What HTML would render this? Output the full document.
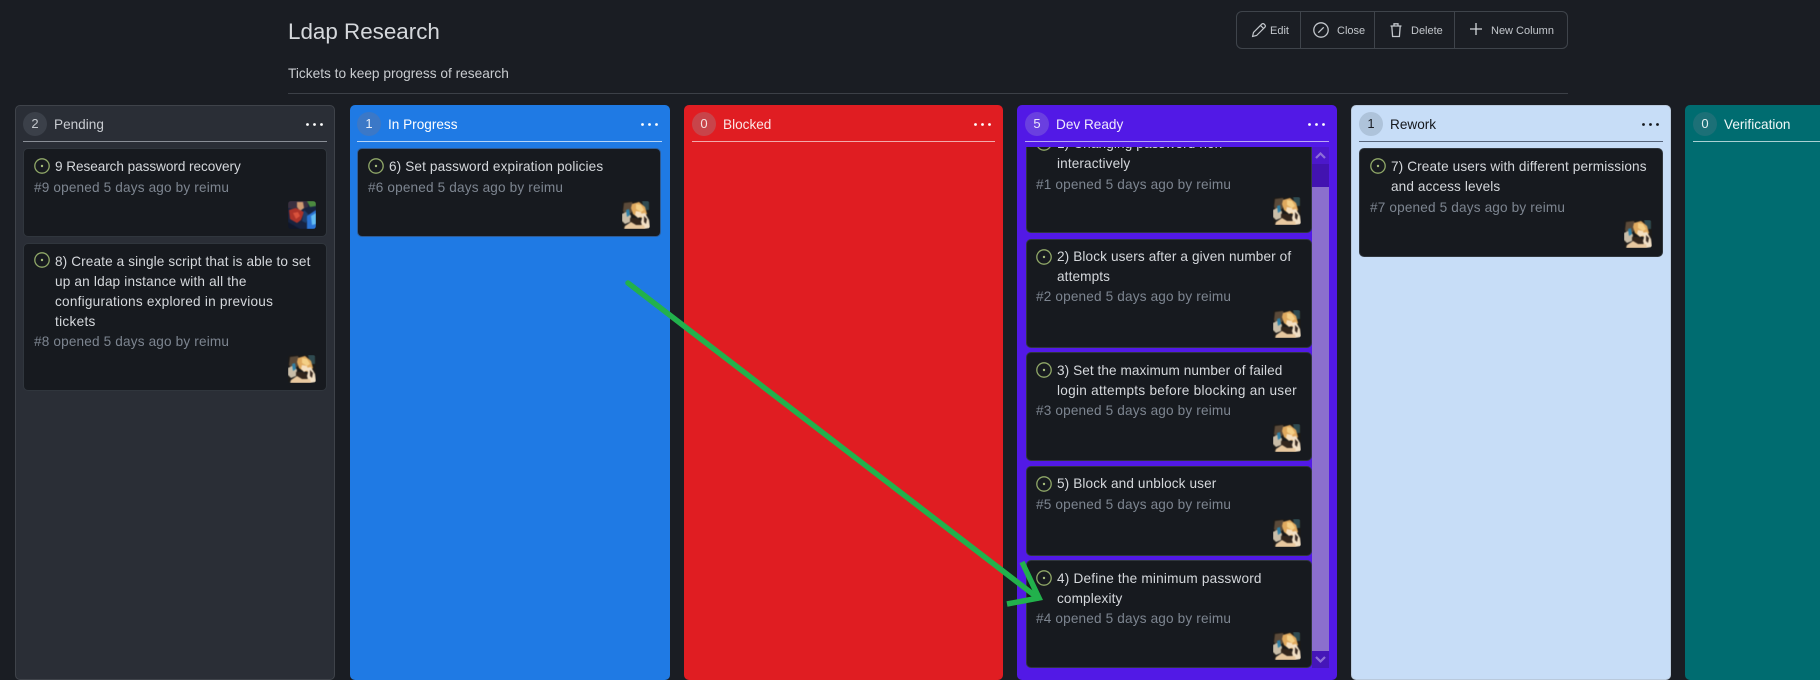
<!DOCTYPE html>
<html lang="en"><head><meta charset="utf-8"><title>Ldap Research</title>
<style>
*{box-sizing:border-box}
html,body{margin:0;padding:0;width:1820px;height:676px;overflow:hidden;background:#1a1d23;font-family:"Liberation Sans",sans-serif}
.a{position:absolute}
.t{position:absolute;white-space:nowrap;line-height:20px;font-size:13.6px;letter-spacing:.12px;color:#d5d8dc}
.m{position:absolute;white-space:nowrap;line-height:20px;font-size:13.6px;letter-spacing:.16px;color:#7d8590}
.col{position:absolute;top:105px;height:575px;width:320px;border-radius:5px;border:1px solid rgba(255,255,255,.1)}
.bd{position:absolute;left:7px;top:6px;width:24px;height:24px;border-radius:50%;text-align:center;line-height:24px;font-size:13px}
.nm{position:absolute;left:38px;top:9px;line-height:20px;font-size:13.6px;white-space:nowrap}
.ln{position:absolute;left:7px;right:7px;top:35px;height:1px}
.dt{position:absolute;right:11px;top:17px;width:17px;height:3px}
.card{position:absolute;background:#171a1f;border:1px solid #30363d;border-radius:5px}
.ic{position:absolute;width:16px;height:16px}
.av{position:absolute;width:28px;height:28px;border-radius:3px}
.btn{position:absolute;top:1px;height:36px;line-height:36px;font-size:11px;color:#c3c7cc;white-space:nowrap}
</style></head><body>
<svg width="0" height="0" style="position:absolute">
<symbol id="o" viewBox="0 0 16 16"><circle cx="8" cy="8" r="7.2" fill="none" stroke="#90a868" stroke-width="1.3"/><circle cx="8" cy="8" r="1.2" fill="#a6bd7c"/></symbol>
<symbol id="g" viewBox="0 0 28 28"><g style="filter:blur(.5px)">
<rect width="28" height="28" fill="#1b1a19"/>
<path d="M2 2l8-1 2 6-3 5-5 2-3-4z" fill="#5b4a39"/>
<path d="M0 13l6-3 3 5-1 6-5 2-3-3z" fill="#c9bda8"/>
<path d="M4 9l3-1 1 6-3 2z" fill="#2f7fa6"/>
<path d="M20 0h7v9h-5z" fill="#2f4a50"/>
<path d="M10 3l7-2 6 5 2 7-4 4-6-1-4-3-2-6z" fill="#dfa95f"/>
<path d="M14 3l5 1 3 5-3 2-5-3z" fill="#f4cf86"/>
<path d="M14 10l5 1 1 4-4 2-3-3z" fill="#f6dfbe"/>
<path d="M8 17l6 0 5 2 1 5-8 0-4-3z" fill="#33261d"/>
<path d="M18 13l5-1 4 7 1 8-7 1-2-7 1-4z" fill="#f2e0c6"/>
<path d="M3 25l6-4 5 3 8 0 1 4H2z" fill="#e8c89f"/>
<path d="M22 15l3 3-1 5-2-2z" fill="#3a2b22"/>
</g></symbol>
<symbol id="r" viewBox="0 0 28 28"><g style="filter:blur(.6px)">
<rect width="28" height="28" fill="#17233f"/>
<path d="M0 0h20v6l-9 3-11-2z" fill="#3a3040"/>
<path d="M19 0h9v5l-6 1z" fill="#4b8a3f"/>
<path d="M9 1h6l1 6-4 3-3-4z" fill="#cf9a72"/>
<path d="M1 9l7-2 8 4-3 8-4 3-7-4z" fill="#ad3329"/>
<path d="M5 12l5-1 2 4-4 3z" fill="#d9523c"/>
<path d="M16 9l5 5-3 8-4-2z" fill="#1d3f6e"/>
<path d="M19 15l9-6v19h-9z" fill="#2a73d4"/>
<path d="M23 15l5-3v11l-4 1z" fill="#63bdf2"/>
<path d="M0 21l12 7H0z" fill="#10172a"/>
</g></symbol>
</svg>

<div class="a" style="left:288px;top:17px;font-size:22.4px;line-height:30px;color:#d5d8dc;white-space:nowrap">Ldap Research</div>
<div class="a" style="left:288px;top:64px;font-size:13.7px;line-height:20px;color:#c9ccd0;white-space:nowrap">Tickets to keep progress of research</div>
<div class="a" style="left:288px;top:93px;width:1280px;height:1px;background:#3c4047"></div>

<div class="a" style="left:1236px;top:11px;width:332px;height:38px;border:1px solid #3f444b;border-radius:6px;background:#1b1e24">
 <div class="a" style="left:63px;top:0;width:1px;height:36px;background:#3f444b"></div>
 <div class="a" style="left:137px;top:0;width:1px;height:36px;background:#3f444b"></div>
 <div class="a" style="left:217px;top:0;width:1px;height:36px;background:#3f444b"></div>
 <svg class="a" style="left:14px;top:10px" width="16" height="16" viewBox="0 0 16 16" fill="none" stroke="#c3c7cc" stroke-width="1.2"><path d="M1.6 14.4l.9-4 8.3-8.3a1.6 1.6 0 0 1 2.3 0l.8.8a1.6 1.6 0 0 1 0 2.3l-8.300 8.300z"/><path d="M9.500 3.400l3.100 3.100"/></svg>
 <div class="btn" style="left:33px">Edit</div>
 <svg class="a" style="left:76px;top:10px" width="16" height="16" viewBox="0 0 16 16" fill="none" stroke="#c3c7cc" stroke-width="1.3"><circle cx="8" cy="8" r="7.200"/><path d="M5.300 10.700l5.400-5.400"/></svg>
 <div class="btn" style="left:100px">Close</div>
 <svg class="a" style="left:151px;top:10px" width="16" height="16" viewBox="0 0 16 16" fill="none" stroke="#c3c7cc" stroke-width="1.3"><path d="M2.500 4h11M6 4V1.800h4V4M3.800 4l.8 10.500h6.800L12.200 4"/></svg>
 <div class="btn" style="left:174px">Delete</div>
 <svg class="a" style="left:231px;top:9px" width="16" height="16" viewBox="0 0 16 16" fill="none" stroke="#d3d6da" stroke-width="1.300"><path d="M8 2v12M2 8h12"/></svg>
 <div class="btn" style="left:254px">New Column</div>
</div>

<!-- Pending -->
<div class="col" style="left:15px;width:320px;background:#2a2e36">
 <div class="bd" style="background:#3b4049;color:#c5c9ce">2</div><div class="nm" style="color:#c9ccd1">Pending</div>
 <div class="ln" style="background:#8a8f97"></div>
 <svg class="dt" viewBox="0 0 17 3"><circle cx="1.500" cy="1.500" r="1.400" fill="#fff"/><circle cx="8.500" cy="1.500" r="1.400" fill="#fff"/><circle cx="15.500" cy="1.500" r="1.400" fill="#fff"/></svg>
</div>
<div class="card" style="left:23px;top:148px;width:304px;height:89px"></div>
<svg class="ic" style="left:34px;top:158px"><use href="#o"/></svg>
<div class="t" style="left:55px;top:157px;letter-spacing:-.06px">9 Research password recovery</div>
<div class="m" style="left:34px;top:178px">#9 opened 5 days ago by reimu</div>
<svg class="av" style="left:288px;top:201px"><use href="#r"/></svg>

<div class="card" style="left:23px;top:243px;width:304px;height:148px"></div>
<svg class="ic" style="left:34px;top:252px"><use href="#o"/></svg>
<div class="t" style="left:55px;top:252px">8) Create a single script that is able to set</div>
<div class="t" style="left:55px;top:272px;letter-spacing:.18px">up an ldap instance with all the</div>
<div class="t" style="left:55px;top:292px;letter-spacing:.23px">configurations explored in previous</div>
<div class="t" style="left:55px;top:312px;letter-spacing:.3px">tickets</div>
<div class="m" style="left:34px;top:332px">#8 opened 5 days ago by reimu</div>
<svg class="av" style="left:288px;top:355px"><use href="#g"/></svg>

<!-- In Progress -->
<div class="col" style="left:350px;background:#1f7ae4;border-color:#1f7ae4">
 <div class="bd" style="background:#3b78c7;color:#e6eefa;left:6px">1</div><div class="nm" style="color:#fff;left:37px">In Progress</div>
 <div class="ln" style="background:#b5d4f7;left:6px"></div>
 <svg class="dt" viewBox="0 0 17 3"><circle cx="1.500" cy="1.500" r="1.400" fill="#fff"/><circle cx="8.500" cy="1.500" r="1.400" fill="#fff"/><circle cx="15.500" cy="1.500" r="1.400" fill="#fff"/></svg>
</div>
<div class="card" style="left:357px;top:148px;width:304px;height:89px;border-color:#2f5b93"></div>
<svg class="ic" style="left:368px;top:158px"><use href="#o"/></svg>
<div class="t" style="left:389px;top:157px">6) Set password expiration policies</div>
<div class="m" style="left:368px;top:178px">#6 opened 5 days ago by reimu</div>
<svg class="av" style="left:622px;top:201px"><use href="#g"/></svg>

<!-- Blocked -->
<div class="col" style="left:684px;width:319px;background:#e01d22;border-color:#e01d22">
 <div class="bd" style="background:#c8444a;color:#f5e0e0;left:7px">0</div><div class="nm" style="color:#fbe6e6;left:38px">Blocked</div>
 <div class="ln" style="background:#f2a9ab"></div>
 <svg class="dt" viewBox="0 0 17 3"><circle cx="1.500" cy="1.500" r="1.400" fill="#fff"/><circle cx="8.500" cy="1.500" r="1.400" fill="#fff"/><circle cx="15.500" cy="1.500" r="1.400" fill="#fff"/></svg>
</div>

<!-- Dev Ready -->
<div class="col" style="left:1017px;background:#5219e6;border-color:#5219e6">
 <div class="bd" style="background:#6a3fe0;color:#efe9fd;left:7px">5</div><div class="nm" style="color:#f0ebfd;left:38px">Dev Ready</div>
 <div class="ln" style="background:#bba8f4"></div>
 <svg class="dt" viewBox="0 0 17 3"><circle cx="1.500" cy="1.500" r="1.400" fill="#fff"/><circle cx="8.500" cy="1.500" r="1.400" fill="#fff"/><circle cx="15.500" cy="1.500" r="1.400" fill="#fff"/></svg>
</div>
<div class="a" style="left:1026px;top:147px;width:286px;height:521px;overflow:hidden">
 <div class="card" style="left:0;top:-40px;width:286px;height:126px"></div>
 <svg class="ic" style="left:10px;top:-12px"><use href="#o"/></svg>
 <div class="t" style="left:31px;top:-13px">1) Changing password non</div>
 <div class="t" style="left:31px;top:7px">interactively</div>
 <div class="m" style="left:10px;top:28px">#1 opened 5 days ago by reimu</div>
 <svg class="av" style="left:247px;top:50px"><use href="#g"/></svg>

 <div class="card" style="left:0;top:92px;width:286px;height:109px"></div>
 <svg class="ic" style="left:10px;top:102px"><use href="#o"/></svg>
 <div class="t" style="left:31px;top:100px">2) Block users after a given number of</div>
 <div class="t" style="left:31px;top:120px">attempts</div>
 <div class="m" style="left:10px;top:140px">#2 opened 5 days ago by reimu</div>
 <svg class="av" style="left:247px;top:163px"><use href="#g"/></svg>

 <div class="card" style="left:0;top:205px;width:286px;height:109px"></div>
 <svg class="ic" style="left:10px;top:215px"><use href="#o"/></svg>
 <div class="t" style="left:31px;top:214px;letter-spacing:.07px">3) Set the maximum number of failed</div>
 <div class="t" style="left:31px;top:234px;letter-spacing:.27px">login attempts before blocking an user</div>
 <div class="m" style="left:10px;top:254px">#3 opened 5 days ago by reimu</div>
 <svg class="av" style="left:247px;top:277px"><use href="#g"/></svg>

 <div class="card" style="left:0;top:319px;width:286px;height:90px"></div>
 <svg class="ic" style="left:10px;top:329px"><use href="#o"/></svg>
 <div class="t" style="left:31px;top:327px">5) Block and unblock user</div>
 <div class="m" style="left:10px;top:348px">#5 opened 5 days ago by reimu</div>
 <svg class="av" style="left:247px;top:372px"><use href="#g"/></svg>

 <div class="card" style="left:0;top:413px;width:286px;height:108px"></div>
 <svg class="ic" style="left:10px;top:423px"><use href="#o"/></svg>
 <div class="t" style="left:31px;top:422px;letter-spacing:.2px">4) Define the minimum password</div>
 <div class="t" style="left:31px;top:442px">complexity</div>
 <div class="m" style="left:10px;top:462px">#4 opened 5 days ago by reimu</div>
 <svg class="av" style="left:247px;top:485px"><use href="#g"/></svg>
</div>
<div class="a" style="left:1312px;top:147px;width:17px;height:521px;background:#4213b0"></div>
<div class="a" style="left:1312px;top:147px;width:17px;height:17px;background:#4c18cb"></div>
<div class="a" style="left:1312px;top:187px;width:17px;height:464px;background:#8b6fcd"></div>
<div class="a" style="left:1312px;top:651px;width:17px;height:17px;background:#4516b8"></div>
<svg class="a" style="left:1312px;top:147px" width="17" height="17" viewBox="0 0 17 17"><path d="M4 11l4.500-4.500L13 11" fill="none" stroke="#8e6fd8" stroke-width="2.200"/></svg>
<svg class="a" style="left:1312px;top:651px" width="17" height="17" viewBox="0 0 17 17"><path d="M4 6l4.500 4.500L13 6" fill="none" stroke="#8e6fd8" stroke-width="2.200"/></svg>

<!-- Rework -->
<div class="col" style="left:1351px;background:#c7ddf7;border-color:#b9c9dc">
 <div class="bd" style="background:#aec3da;color:#1a1d23;left:7px">1</div><div class="nm" style="color:#14171c;left:38px">Rework</div>
 <div class="ln" style="background:#56647a"></div>
 <svg class="dt" viewBox="0 0 17 3"><circle cx="1.500" cy="1.500" r="1.400" fill="#14171c"/><circle cx="8.500" cy="1.500" r="1.400" fill="#14171c"/><circle cx="15.500" cy="1.500" r="1.400" fill="#14171c"/></svg>
</div>
<div class="card" style="left:1359px;top:148px;width:304px;height:109px"></div>
<svg class="ic" style="left:1370px;top:158px"><use href="#o"/></svg>
<div class="t" style="left:1391px;top:157px">7) Create users with different permissions</div>
<div class="t" style="left:1391px;top:177px">and access levels</div>
<div class="m" style="left:1370px;top:198px">#7 opened 5 days ago by reimu</div>
<svg class="av" style="left:1624px;top:220px"><use href="#g"/></svg>

<!-- Verification -->
<div class="col" style="left:1685px;width:200px;background:#006c70;border-color:#006c70">
 <div class="bd" style="background:#1c7077;color:#e3f1f1;left:7px">0</div><div class="nm" style="color:#f0f8f8;left:38px">Verification</div>
 <div class="ln" style="background:#a9d1d3;right:0"></div>
</div>

<!-- Arrow -->
<svg class="a" style="left:0;top:0" width="1820" height="676" viewBox="0 0 1820 676" fill="none">
 <path d="M628 283L1038 598" stroke="#22b14c" stroke-width="5.500" stroke-linecap="round"/>
 <path d="M1022 562L1039 598L1007 604" stroke="#22b14c" stroke-width="5.500"/>
</svg>
</body></html>
